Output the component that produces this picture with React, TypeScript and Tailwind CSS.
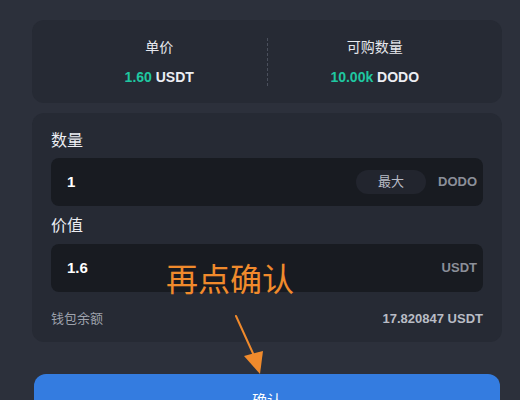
const font = { fontFamily: '"Liberation Sans", "Noto Sans CJK SC", sans-serif' };

const Arrow = () => (
  <svg className="absolute left-[230px] top-[312px]" width="40" height="64" viewBox="0 0 40 64">
    <line x1="6" y1="4" x2="26" y2="48" stroke="#f08a2c" strokeWidth="2" strokeLinecap="round" />
    <polygon points="14,44 33,39 30,62" fill="#f08a2c" />
  </svg>
);

export default function App() {
  return (
    <div className="relative w-[520px] h-[400px] overflow-hidden bg-[#2c303b] text-white" style={font}>
      <div className="pt-5 pl-8 pr-[18px]">
        {/* price summary */}
        <div className="h-[83px] rounded-xl bg-[#262a34] flex items-center px-5">
          <div className="flex-1 flex flex-col items-center gap-[14px]">
            <div className="text-[14px] leading-4 text-[#e6e8ee]">单价</div>
            <div className="text-[14px] leading-4 font-bold">
              <span className="text-[#1fc7a0]">1.60</span> <span className="text-[#eceef3]">USDT</span>
            </div>
          </div>
          <div className="h-[48px] border-l border-dashed border-[#4a4f5c]" />
          <div className="flex-1 flex flex-col items-center gap-[14px]">
            <div className="text-[14px] leading-4 text-[#e6e8ee]">可购数量</div>
            <div className="text-[14px] leading-4 font-bold">
              <span className="text-[#1fc7a0]">10.00k</span> <span className="text-[#eceef3]">DODO</span>
            </div>
          </div>
        </div>

        {/* form */}
        <div className="mt-[10px] h-[229px] rounded-xl bg-[#262a34] px-[19px] pt-[18px]">
          <div className="text-[16px] leading-5 text-[#eceef3]">数量</div>
          <div className="mt-[7px] h-[48px] rounded-lg bg-[#181b21] flex items-center pl-4 pr-[6px]">
            <span className="flex-1 text-[15px] font-bold">1</span>
            <span className="w-[70px] h-6 rounded-full bg-[#22252e] flex items-center justify-center text-[13px] text-[#b8bcc6]">最大</span>
            <span className="ml-3 text-[13px] font-bold text-[#8b8f99]">DODO</span>
          </div>
          <div className="mt-[10px] text-[16px] leading-5 text-[#eceef3]">价值</div>
          <div className="mt-[8px] h-[48px] rounded-lg bg-[#181b21] flex items-center pl-4 pr-[6px]">
            <span className="flex-1 text-[15px] font-bold">1.6</span>
            <span className="text-[13px] font-bold text-[#8b8f99]">USDT</span>
          </div>
          <div className="mt-[17px] flex items-center justify-between text-[13px] text-[#9ea2ac]">
            <span>钱包余额</span>
            <span className="font-bold text-[#b9bcc5]">17.820847 USDT</span>
          </div>
        </div>

        <div className="mt-[32px] ml-[2px] mr-[2px] h-[60px] rounded-xl bg-[#347ce0] flex justify-center pt-[16px] text-[15px]">确认</div>
      </div>

      <div className="absolute left-[166px] top-[257px] text-[32px] leading-10 text-[#f08a2c]" style={{ fontFamily: '"Noto Sans CJK SC", sans-serif' }}>
        再点确认
      </div>
      <Arrow />
    </div>
  );
}
